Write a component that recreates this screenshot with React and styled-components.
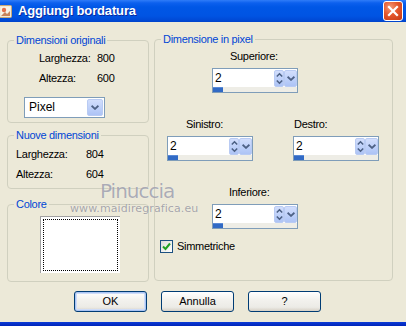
import React from "react";
import styled, { createGlobalStyle } from "styled-components";

const GlobalStyle = createGlobalStyle`
  html, body { margin: 0; padding: 0; }
  body {
    background: #ECE9D8;
    font-family: "Liberation Sans", Arial, sans-serif;
    font-size: 11px;
    color: #000;
  }
  * { box-sizing: border-box; }
`;

const Window = styled.div`
  position: relative;
  width: 406px;
  height: 326px;
  background: #ECE9D8;
  display: flex;
  flex-direction: column;
  overflow: hidden;
  letter-spacing: -0.3px;
`;

const TitleBar = styled.div`
  height: 22px;
  flex-shrink: 0;
  display: flex;
  align-items: center;
  padding-right: 3px;
  background: linear-gradient(
    #2f7cf8 0px,
    #0c60ee 3px,
    #0057e6 7px,
    #0054e3 16px,
    #004ad6 20px,
    #0043cb 22px
  );
`;

const TitleIcon = styled.svg`
  width: 13px;
  height: 13px;
  margin-left: -1px;
  flex-shrink: 0;
`;

const TitleText = styled.div`
  margin-left: 6px;
  font-family: "Liberation Sans", Arial, sans-serif;
  font-weight: bold;
  font-size: 13px;
  letter-spacing: -0.15px;
  color: #fff;
  text-shadow: 1px 1px 0 #0a2aa0;
  line-height: 22px;
`;

const CloseButton = styled.div`
  margin-left: auto;
  align-self: flex-start;
  margin-top: 1px;
  width: 20px;
  height: 20px;
  border: 1px solid #fff;
  border-radius: 3px;
  background: radial-gradient(circle at 35% 30%, #f49a78 0%, #e4562c 45%, #c63a14 100%);
  display: flex;
  align-items: center;
  justify-content: center;
`;

const Body = styled.div`
  flex: 1;
  display: flex;
  flex-direction: column;
  padding: 17px 0 0 7px;
`;

const Columns = styled.div`
  display: flex;
  gap: 5px;
`;

const LeftCol = styled.div`
  width: 142px;
  display: flex;
  flex-direction: column;
  margin-top: 1px;
`;

const Group = styled.div`
  position: relative;
  width: ${(p) => p.$w}px;
  height: ${(p) => p.$h}px;
  margin-top: ${(p) => p.$mt || 0}px;
  border: 1px solid #d0d0bf;
  border-radius: 4px;
  padding: ${(p) => p.$pad || "0"};
`;

const Legend = styled.span`
  position: absolute;
  top: -7px;
  left: 6px;
  padding: 0 2px;
  background: #ece9d8;
  color: #0046d5;
  line-height: 13px;
  white-space: nowrap;
`;

const InfoRows = styled.div`
  display: flex;
  flex-direction: column;
  gap: 7px;
  margin-left: ${(p) => p.$ml || 0}px;
`;

const InfoRow = styled.div`
  display: flex;
  line-height: 13px;
`;

const InfoLabel = styled.span`
  width: ${(p) => p.$w}px;
  flex-shrink: 0;
`;

const Select = styled.div`
  margin-top: 12px;
  width: 81px;
  height: 21px;
  border: 1px solid #7f9db9;
  background: #fff;
  display: flex;
  padding: 1px;
`;

const SelectText = styled.div`
  flex: 1;
  padding-left: 3px;
  font-size: 12px;
  line-height: 17px;
  letter-spacing: 0;
`;

const DropButton = styled.div`
  width: ${(p) => p.$w}px;
  height: 100%;
  flex-shrink: 0;
  border: 1px solid #b9cbf3;
  border-radius: 2px;
  background: linear-gradient(#d2defc, #bccff9 60%, #adc3f5);
  display: flex;
  align-items: center;
  justify-content: center;
`;

const Swatch = styled.div`
  margin: 11px 0 0 32px;
  width: 80px;
  height: 57px;
  background: #fff;
  border-top: 1px solid #a0a0a0;
  border-left: 1px solid #a0a0a0;
  padding: 2px;
`;

const SwatchInner = styled.div`
  width: 100%;
  height: 100%;
  border: 1px dotted #000;
`;

const RightGroupInner = styled.div`
  display: flex;
  flex-direction: column;
  padding-top: 10px;
`;

const SpinBlock = styled.div`
  display: flex;
  flex-direction: column;
  gap: 5px;
  margin-left: ${(p) => p.$ml || 0}px;
  margin-top: ${(p) => p.$mt || 0}px;
`;

const SpinLabel = styled.div`
  line-height: 13px;
  margin-left: ${(p) => p.$ml || 0}px;
`;

const SpinRow = styled.div`
  display: flex;
  gap: 40px;
  margin-left: 12px;
  margin-top: 25px;
`;

const SpinBox = styled.div`
  width: 86px;
  height: 25px;
  border: 1px solid #7f9db9;
  background: #fff;
  display: flex;
  flex-direction: column;
`;

const SpinTop = styled.div`
  height: 18px;
  display: flex;
  padding: 1px 0 0 0;
`;

const SpinValue = styled.div`
  flex: 1;
  padding-left: 2px;
  font-size: 12px;
  line-height: 16px;
  letter-spacing: 0;
`;

const UpDown = styled.div`
  width: 10px;
  height: 17px;
  border: 1px solid #b9cbf3;
  border-radius: 2px;
  background: linear-gradient(#d2defc, #bccff9 60%, #adc3f5);
  display: flex;
  align-items: center;
  justify-content: center;
`;

const Strip = styled.div`
  height: 5px;
  background: #eeede6;
  display: flex;
`;

const StripFill = styled.div`
  width: 10px;
  height: 100%;
  background: #316ac5;
  border-top: 1px solid #5a8ad6;
`;

const CheckRow = styled.div`
  display: flex;
  align-items: center;
  gap: 4px;
  margin: 11px 0 0 5px;
  line-height: 13px;
`;

const CheckBox = styled.div`
  width: 13px;
  height: 13px;
  border: 1px solid #1c5180;
  background: linear-gradient(135deg, #dcdcd7, #fff);
  display: flex;
  align-items: center;
  justify-content: center;
`;

const ButtonRow = styled.div`
  display: flex;
  gap: 14px;
  margin: 9px 0 0 67px;
`;

const Button = styled.div`
  width: 73px;
  height: 21px;
  border: 1px solid #003c74;
  border-radius: 3px;
  background: linear-gradient(#ffffff, #f3f2ee 40%, #ecebe6 80%, #d6d0c5);
  display: flex;
  align-items: center;
  justify-content: center;
  line-height: 13px;
  letter-spacing: 0;
  box-shadow: ${(p) =>
    p.$default ? "inset 0 0 0 1px #a9c4f3, inset 0 0 0 2px #cedcf8" : "none"};
`;

const BottomBar = styled.div`
  height: 4px;
  flex-shrink: 0;
  background: linear-gradient(#0b3bd6, #0024b8);
`;

const Watermark = styled.div`
  position: absolute;
  left: ${(p) => p.$x}px;
  top: ${(p) => p.$y}px;
  font-family: "DejaVu Sans", Verdana, sans-serif;
  font-size: ${(p) => p.$size}px;
  line-height: ${(p) => p.$size}px;
  letter-spacing: ${(p) => p.$ls}px;
  color: ${(p) => p.$color};
  text-shadow: 0 0 1px rgba(255, 255, 255, 0.6);
  white-space: nowrap;
  pointer-events: none;
`;

const Chevron = ({ w = 7, h = 4 }) => (
  <svg width={w} height={h} viewBox="0 0 7 4">
    <path d="M0.5 0.5 L3.5 3.2 L6.5 0.5" fill="none" stroke="#4d6185" strokeWidth="1.6" />
  </svg>
);

const UpDownIcon = () => (
  <svg width="7" height="13" viewBox="0 0 7 13">
    <path d="M0.8 4.5 L3.5 1.8 L6.2 4.5" fill="none" stroke="#4d6185" strokeWidth="1.6" />
    <path d="M0.8 8.5 L3.5 11.2 L6.2 8.5" fill="none" stroke="#4d6185" strokeWidth="1.6" />
  </svg>
);

const Spinner = ({ value }) => (
  <SpinBox>
    <SpinTop>
      <SpinValue>{value}</SpinValue>
      <UpDown>
        <UpDownIcon />
      </UpDown>
      <DropButton $w={13}>
        <Chevron w={8} h={5} />
      </DropButton>
    </SpinTop>
    <Strip>
      <StripFill />
    </Strip>
  </SpinBox>
);

export default function App() {
  return (
    <>
      <GlobalStyle />
      <Window>
        <TitleBar>
          <TitleIcon viewBox="0 0 13 13">
            <rect x="0.5" y="0.5" width="12" height="12" rx="1" fill="#f4ead6" stroke="#c9a878" />
            <rect x="2" y="2" width="9" height="9" fill="#f8f2e6" />
            <circle cx="5" cy="5" r="2.2" fill="#e3704a" />
            <path d="M2 11 L6 7 L8 9 L11 6 L11 11 Z" fill="#c9845a" />
          </TitleIcon>
          <TitleText>Aggiungi bordatura</TitleText>
          <CloseButton>
            <svg width="12" height="12" viewBox="0 0 12 12">
              <path d="M2 2 L10 10 M10 2 L2 10" stroke="#fff" strokeWidth="2.2" strokeLinecap="square" />
            </svg>
          </CloseButton>
        </TitleBar>
        <Body>
          <Columns>
            <LeftCol>
              <Group $w={142} $h={83} $pad="11px 0 0 16px">
                <Legend>Dimensioni originali</Legend>
                <InfoRows $ml={15}>
                  <InfoRow>
                    <InfoLabel $w={58}>Larghezza:</InfoLabel>
                    <span>800</span>
                  </InfoRow>
                  <InfoRow>
                    <InfoLabel $w={58}>Altezza:</InfoLabel>
                    <span>600</span>
                  </InfoRow>
                </InfoRows>
                <Select>
                  <SelectText>Pixel</SelectText>
                  <DropButton $w={16}>
                    <Chevron w={8} h={5} />
                  </DropButton>
                </Select>
              </Group>
              <Group $w={142} $h={54} $mt={12} $pad="12px 0 0 8px">
                <Legend>Nuove dimensioni</Legend>
                <InfoRows>
                  <InfoRow>
                    <InfoLabel $w={70}>Larghezza:</InfoLabel>
                    <span>804</span>
                  </InfoRow>
                  <InfoRow>
                    <InfoLabel $w={70}>Altezza:</InfoLabel>
                    <span>604</span>
                  </InfoRow>
                </InfoRows>
              </Group>
              <Group $w={142} $h={78} $mt={15}>
                <Legend>Colore</Legend>
                <Swatch>
                  <SwatchInner />
                </Swatch>
              </Group>
            </LeftCol>
            <Group $w={239} $h={242}>
              <Legend>Dimensione in pixel</Legend>
              <RightGroupInner>
                <SpinBlock $ml={57}>
                  <SpinLabel $ml={18}>Superiore:</SpinLabel>
                  <Spinner value="2" />
                </SpinBlock>
                <SpinRow>
                  <SpinBlock>
                    <SpinLabel $ml={19}>Sinistro:</SpinLabel>
                    <Spinner value="2" />
                  </SpinBlock>
                  <SpinBlock>
                    <SpinLabel $ml={1}>Destro:</SpinLabel>
                    <Spinner value="2" />
                  </SpinBlock>
                </SpinRow>
                <SpinBlock $ml={57} $mt={25}>
                  <SpinLabel $ml={17}>Inferiore:</SpinLabel>
                  <Spinner value="2" />
                </SpinBlock>
                <CheckRow>
                  <CheckBox>
                    <svg width="9" height="9" viewBox="0 0 9 9">
                      <path d="M1 4.5 L3.5 7 L8 1.5" fill="none" stroke="#21a121" strokeWidth="2" />
                    </svg>
                  </CheckBox>
                  <span>Simmetriche</span>
                </CheckRow>
              </RightGroupInner>
            </Group>
          </Columns>
          <ButtonRow>
            <Button $default>OK</Button>
            <Button>Annulla</Button>
            <Button>?</Button>
          </ButtonRow>
        </Body>
        <BottomBar />
        <Watermark $x={100} $y={181} $size={20} $ls={-1} $color="rgba(120,122,145,0.6)">
          Pinuccia
        </Watermark>
        <Watermark $x={70} $y={203} $size={11} $ls={0.1} $color="rgba(110,110,125,0.6)">
          www.maidiregrafica.eu
        </Watermark>
      </Window>
    </>
  );
}
